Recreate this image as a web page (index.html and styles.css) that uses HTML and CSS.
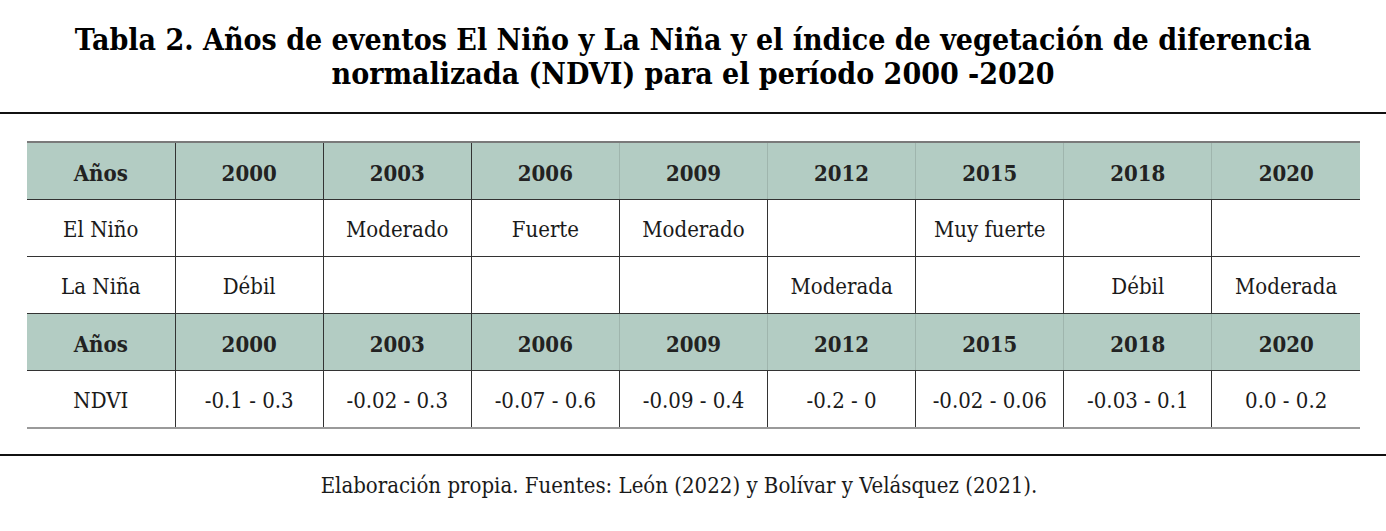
FILE: index.html
```html
<!DOCTYPE html>
<html lang="es">
<head>
<meta charset="utf-8">
<title>Tabla 2</title>
<link rel="stylesheet" href="styles.css">
</head>
<body>
<div class="page">
  <h1 class="title">Tabla 2. Años de eventos El Niño y La Niña y el índice de vegetación de diferencia<br>normalizada (NDVI) para el período 2000 -2020</h1>
  <hr class="rule rule-top">
  <div class="table-wrap">
    <table class="data">
      <tr class="head">
        <th>Años</th><th>2000</th><th>2003</th><th>2006</th><th>2009</th><th>2012</th><th>2015</th><th>2018</th><th>2020</th>
      </tr>
      <tr>
        <td>El Niño</td><td></td><td>Moderado</td><td>Fuerte</td><td>Moderado</td><td></td><td>Muy fuerte</td><td></td><td></td>
      </tr>
      <tr>
        <td>La Niña</td><td>Débil</td><td></td><td></td><td></td><td>Moderada</td><td></td><td>Débil</td><td>Moderada</td>
      </tr>
      <tr class="head">
        <th>Años</th><th>2000</th><th>2003</th><th>2006</th><th>2009</th><th>2012</th><th>2015</th><th>2018</th><th>2020</th>
      </tr>
      <tr class="last">
        <td>NDVI</td><td>-0.1 - 0.3</td><td>-0.02 - 0.3</td><td>-0.07 - 0.6</td><td>-0.09 - 0.4</td><td>-0.2 - 0</td><td>-0.02 - 0.06</td><td>-0.03 - 0.1</td><td>0.0 - 0.2</td>
      </tr>
    </table>
  </div>
  <hr class="rule rule-bottom">
  <p class="caption">Elaboración propia. Fuentes: León (2022) y Bolívar y Velásquez (2021).</p>
</div>
</body>
</html>
```
FILE: styles.css
```css
html, body {
  margin: 0;
  padding: 0;
  background: #ffffff;
}
.page {
  width: 1386px;
  height: 531px;
  overflow: hidden;
  font-family: "DejaVu Serif Condensed", "DejaVu Serif", serif;
  font-stretch: condensed;
  color: #1a1a1a;
}
.title {
  margin: 0;
  padding-top: 23px;
  font-size: 30px;
  line-height: 34px;
  font-weight: bold;
  text-align: center;
  color: #000;
}
.rule {
  border: 0;
  margin: 0;
  height: 2px;
  background: #111;
}
.rule-top {
  margin-top: 21px;
}
.table-wrap {
  padding: 27px 26px 0 27px;
}
.data {
  width: 1333px;
  border-collapse: collapse;
  table-layout: fixed;
  font-size: 22px;
  border-top: 2px solid #7a7a7a;
  border-bottom: 2px solid #9a9a9a;
}
.data th, .data td {
  height: 53px;
  padding: 3px 0 0 0;
  text-align: center;
  vertical-align: middle;
  border-left: 1px solid #333;
  border-bottom: 1px solid #333;
}
.data th:first-child, .data td:first-child {
  border-left: 0;
}
.data .head th {
  background: #b3ccc3;
  font-weight: bold;
  color: #222;
}
.data .head th:nth-child(n+5) {
  border-left-color: #9fb5ad;
}
.data .last td {
  border-bottom: 0;
}
.rule-bottom {
  margin-top: 25px;
}
.caption {
  margin: 0;
  padding: 17px 28px 0 0;
  font-size: 22px;
  line-height: 26px;
  text-align: center;
  color: #1a1a1a;
}
```
